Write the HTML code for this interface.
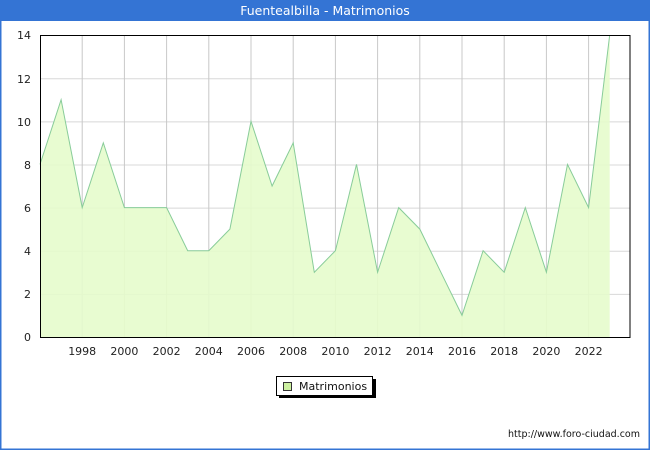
<!DOCTYPE html>
<html><head><meta charset="utf-8"><style>
html,body{margin:0;padding:0;width:650px;height:450px;overflow:hidden;background:#fff}
svg{display:block;font-family:"DejaVu Sans","Liberation Sans",sans-serif}
</style></head><body>
<svg width="650" height="450" viewBox="0 0 650 450">
<rect x="0.5" y="0.5" width="649" height="449" fill="#fff" stroke="#3474d4" stroke-width="2"/>
<rect x="0" y="0" width="650" height="21" fill="#3474d4"/>
<text x="325" y="15" font-size="12.5" fill="#fff" text-anchor="middle">Fuentealbilla - Matrimonios</text>
<g stroke="#d8d8d8" stroke-width="1">
<line x1="40" y1="294.4" x2="630" y2="294.4"/><line x1="40" y1="251.3" x2="630" y2="251.3"/>
<line x1="40" y1="208.1" x2="630" y2="208.1"/><line x1="40" y1="165" x2="630" y2="165"/>
<line x1="40" y1="121.9" x2="630" y2="121.9"/><line x1="40" y1="78.7" x2="630" y2="78.7"/>
</g>
<g stroke="#c8c8c8" stroke-width="1">
<line x1="82.2" y1="35" x2="82.2" y2="337"/><line x1="124.4" y1="35" x2="124.4" y2="337"/>
<line x1="166.6" y1="35" x2="166.6" y2="337"/><line x1="208.8" y1="35" x2="208.8" y2="337"/>
<line x1="251" y1="35" x2="251" y2="337"/><line x1="293.2" y1="35" x2="293.2" y2="337"/>
<line x1="335.4" y1="35" x2="335.4" y2="337"/><line x1="377.6" y1="35" x2="377.6" y2="337"/>
<line x1="419.8" y1="35" x2="419.8" y2="337"/><line x1="462" y1="35" x2="462" y2="337"/>
<line x1="504.2" y1="35" x2="504.2" y2="337"/><line x1="546.4" y1="35" x2="546.4" y2="337"/>
<line x1="588.6" y1="35" x2="588.6" y2="337"/>
</g>
<polygon fill="#e6fccc" fill-opacity="0.9" stroke="none" points="40,337 40,164.4 61.1,99.7 82.2,207.6 103.3,142.9 124.4,207.6 145.5,207.6 166.6,207.6 187.7,250.7 208.8,250.7 229.9,229.1 251,121.3 272.1,186 293.2,142.9 314.3,272.3 335.4,250.7 356.5,164.4 377.6,272.3 398.7,207.6 419.8,229.1 440.9,272.3 462,315.4 483.1,250.7 504.2,272.3 525.3,207.6 546.4,272.3 567.5,164.4 588.6,207.6 609.7,35 609.7,337"/>
<polyline fill="none" stroke="#88cc99" stroke-width="1" points="40,164.4 61.1,99.7 82.2,207.6 103.3,142.9 124.4,207.6 145.5,207.6 166.6,207.6 187.7,250.7 208.8,250.7 229.9,229.1 251,121.3 272.1,186 293.2,142.9 314.3,272.3 335.4,250.7 356.5,164.4 377.6,272.3 398.7,207.6 419.8,229.1 440.9,272.3 462,315.4 483.1,250.7 504.2,272.3 525.3,207.6 546.4,272.3 567.5,164.4 588.6,207.6 609.7,35"/>
<rect x="40.5" y="35.5" width="589.5" height="302" fill="none" stroke="#000" stroke-width="1"/>
<g font-size="11" fill="#222" text-anchor="end">
<text x="31" y="341">0</text><text x="31" y="298">2</text><text x="31" y="255">4</text>
<text x="31" y="212">6</text><text x="31" y="169">8</text><text x="31" y="126">10</text>
<text x="31" y="83">12</text><text x="31" y="39">14</text>
</g>
<g font-size="11" fill="#222" text-anchor="middle">
<text x="82.2" y="355">1998</text><text x="124.4" y="355">2000</text><text x="166.6" y="355">2002</text>
<text x="208.8" y="355">2004</text><text x="251" y="355">2006</text><text x="293.2" y="355">2008</text>
<text x="335.4" y="355">2010</text><text x="377.6" y="355">2012</text><text x="419.8" y="355">2014</text>
<text x="462" y="355">2016</text><text x="504.2" y="355">2018</text><text x="546.4" y="355">2020</text>
<text x="588.6" y="355">2022</text>
</g>
<rect x="279" y="379" width="97" height="19" fill="#000"/>
<rect x="276.5" y="376.5" width="96" height="19" fill="#fff" stroke="#000" stroke-width="1"/>
<rect x="283.5" y="382.5" width="8" height="8" fill="#ccf0a0" stroke="#333" stroke-width="1"/>
<text x="299" y="390" font-size="11" fill="#111">Matrimonios</text>
<text x="640" y="437" font-size="9.5" fill="#111" text-anchor="end" textLength="132" lengthAdjust="spacingAndGlyphs">http://www.foro-ciudad.com</text>
</svg>
</body></html>
